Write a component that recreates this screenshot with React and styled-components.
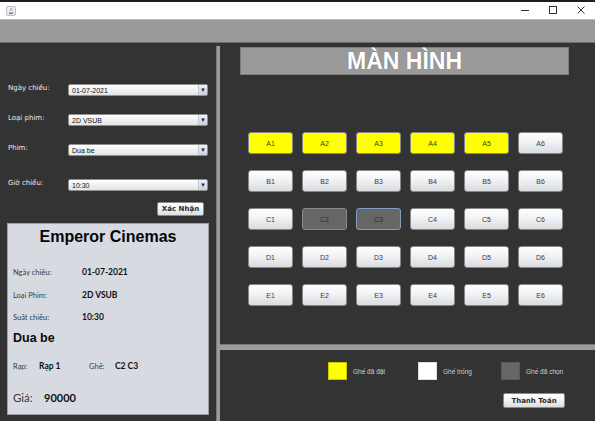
import React from 'react';
import styled, { createGlobalStyle } from 'styled-components';

const Global = createGlobalStyle`
  body {
    margin: 0;
    background: #333333;
    font-family: "Liberation Sans", Arial, sans-serif;
  }
`;

const Frame = styled.div`
  width: 595px;
  height: 421px;
  display: flex;
  flex-direction: column;
  overflow: hidden;
  background: #333333;
`;

const DesktopEdge = styled.div`
  height: 2px;
  background: #1d1d24;
`;

const TitleBar = styled.div`
  height: 17px;
  background: #ffffff;
  border-bottom: 1px solid #b8b8b8;
  display: flex;
  align-items: center;
  padding-left: 6px;
`;

const WindowControls = styled.div`
  margin-left: auto;
  display: flex;
`;

const ControlButton = styled.div`
  width: 28px;
  height: 17px;
  display: flex;
  align-items: center;
  justify-content: center;
`;

const Toolbar = styled.div`
  height: 22px;
  background: #999999;
  border-bottom: 1px solid #6c6c6c;
`;

const Body = styled.div`
  flex: 1;
  display: flex;
  min-height: 0;
`;

const LeftPanel = styled.div`
  width: 216px;
  background: #333333;
  display: flex;
  flex-direction: column;
`;

const VDivider = styled.div`
  width: 4px;
  margin-top: 3px;
  background: #9b9b9b;
  border-left: 1px solid #7a7a7a;
  box-sizing: border-box;
`;

const RightColumn = styled.div`
  flex: 1;
  display: flex;
  flex-direction: column;
`;

const SeatPanel = styled.div`
  flex: 1;
  background: #333333;
  padding: 4px 0 0 20px;
`;

const HDivider = styled.div`
  height: 6px;
  background: #9b9b9b;
  border-top: 1px solid #7a7a7a;
  box-sizing: border-box;
`;

const LegendPanel = styled.div`
  height: 71px;
  background: #333333;
  padding: 12px 30px 0 108px;
  box-sizing: border-box;
`;

/* ---- left form ---- */

const Form = styled.div`
  padding: 41px 8px 0 8px;
`;

const FormRow = styled.div`
  display: flex;
  align-items: center;
  height: 12px;
  margin-top: ${p => p.$top || 0}px;
`;

const FormLabel = styled.span`
  width: 60px;
  margin-top: -5px;
  font-family: "DejaVu Sans", sans-serif;
  font-size: 7px;
  color: #ececec;
`;

const Combo = styled.div`
  width: 140px;
  height: 12px;
  box-sizing: border-box;
  border: 1px solid #8f8f8f;
  border-radius: 2px;
  background: linear-gradient(#ffffff, #f0f1f3 50%, #e2e4e8);
  display: flex;
  align-items: center;
`;

const ComboText = styled.span`
  flex: 1;
  padding-left: 3px;
  font-size: 7px;
  color: #111;
`;

const ComboArrow = styled.span`
  width: 8px;
  height: 10px;
  margin-right: 0;
  border-left: 1px solid #c4cad4;
  background: linear-gradient(#eef1f6, #c9d1de);
  display: flex;
  align-items: center;
  justify-content: center;
  font-size: 6px;
  color: #1c2a48;
`;

const ButtonRow = styled.div`
  display: flex;
  justify-content: flex-end;
  padding-right: 4px;
  margin-top: 11px;
`;

const SwingButton = styled.div`
  width: ${p => p.$w}px;
  height: ${p => p.$h}px;
  box-sizing: border-box;
  border: 1px solid #8a8a8a;
  border-radius: 2px;
  background: linear-gradient(#ffffff, #f3f3f5 50%, #dcdde1);
  display: flex;
  align-items: center;
  justify-content: center;
  font-family: "DejaVu Sans", sans-serif;
  font-size: 7px;
  font-weight: bold;
  color: #2a2a2a;
`;

/* ---- ticket ---- */

const Ticket = styled.div`
  margin: 7px 0 0 7px;
  width: 202px;
  height: 192px;
  box-sizing: border-box;
  background: #d7dae1;
  border: 1px solid #9da0a6;
  padding-left: 5px;
  display: flex;
  flex-direction: column;
  color: #111;
`;

const TicketTitle = styled.div`
  padding-top: 4px;
  line-height: 18px;
  text-align: center;
  font-size: 16px;
  font-weight: bold;
  color: #050505;
  margin-left: -5px;
`;

const TicketRow = styled.div`
  display: flex;
  align-items: center;
  height: ${p => p.$h || 12}px;
  margin-top: ${p => p.$top}px;
`;

const TicketLabel = styled.span`
  width: ${p => p.$w}px;
  font-family: Lato, sans-serif;
  font-size: ${p => p.$size || 7.5}px;
  color: #3a3a3a;
`;

const TicketValue = styled.span`
  width: ${p => (p.$w ? `${p.$w}px` : 'auto')};
  font-family: Lato, sans-serif;
  font-weight: bold;
  font-size: ${p => p.$size || 8.5}px;
  color: #111;
`;

const MovieName = styled.div`
  margin-top: 7px;
  line-height: 16px;
  font-size: 12.5px;
  font-weight: bold;
  color: #0a0a0a;
`;

/* ---- seats ---- */

const Screen = styled.div`
  width: 329px;
  height: 28px;
  box-sizing: border-box;
  background: #9a9a9a;
  border: 1px solid #7c7c7c;
  display: flex;
  align-items: center;
  justify-content: center;
  font-size: 23px;
  font-weight: bold;
  color: #ffffff;
  text-shadow: 0 0 1px rgba(0, 0, 0, 0.25);
`;

const SeatGrid = styled.div`
  margin: 57px 0 0 8px;
  display: grid;
  grid-template-columns: repeat(6, 45px);
  grid-auto-rows: 22px;
  gap: 16px 9px;
`;

const seatBg = {
  booked: '#ffff00',
  picked: '#666666',
  free: 'linear-gradient(#ffffff, #f1f2f4 45%, #dadbe0)',
};

const Seat = styled.div`
  box-sizing: border-box;
  border: 1px solid ${p => (p.$focus ? '#7f9ec4' : p.$state === 'picked' ? '#8a8a8a' : '#888888')};
  border-radius: 3px;
  background: ${p => seatBg[p.$state]};
  display: flex;
  align-items: center;
  justify-content: center;
  font-size: 7px;
  color: ${p => (p.$state === 'picked' ? '#2c2c2c' : '#3a3a3a')};
`;

/* ---- legend ---- */

const Legend = styled.div`
  display: grid;
  grid-template-columns: 90px 83px auto;
  align-items: center;
`;

const LegendItem = styled.div`
  display: flex;
  align-items: center;
`;

const Swatch = styled.div`
  width: 19px;
  height: 18px;
  box-sizing: border-box;
  background: ${p => p.$color};
  border: 1px solid ${p => p.$edge};
`;

const LegendText = styled.span`
  margin-left: 6px;
  font-size: 6.5px;
  color: #d0d0d0;
`;

const PayRow = styled.div`
  display: flex;
  justify-content: flex-end;
  margin-top: 13px;
`;

const rows = ['A', 'B', 'C', 'D', 'E'];

const seatState = id => {
  if (id[0] === 'A' && id !== 'A6') return 'booked';
  if (id === 'C2' || id === 'C3') return 'picked';
  return 'free';
};

const JavaIcon = () => (
  <svg width="10" height="10" viewBox="0 0 10 10">
    <rect x="0.5" y="0.5" width="9" height="9" rx="1.5" fill="#e9ecf2" stroke="#b9c0cc" />
    <path d="M3 6.5h4v1.5H3z" fill="#5a7fb0" />
    <path d="M4.5 2.2c1 .8-.6 1.5.4 2.6M5.6 2.6c.6.6-.4 1 .2 1.8" stroke="#e07b2a" strokeWidth="0.8" fill="none" />
  </svg>
);

const Minimize = () => (
  <svg width="9" height="9" viewBox="0 0 9 9">
    <path d="M0 4.5h8" stroke="#333" strokeWidth="1" />
  </svg>
);

const Maximize = () => (
  <svg width="9" height="9" viewBox="0 0 9 9">
    <rect x="0.5" y="0.5" width="7" height="7" fill="none" stroke="#333" strokeWidth="1" />
  </svg>
);

const Close = () => (
  <svg width="9" height="9" viewBox="0 0 9 9">
    <path d="M0.5 0.5l7 7M7.5 0.5l-7 7" stroke="#333" strokeWidth="1" />
  </svg>
);

const formFields = [
  { label: 'Ngày chiếu:', value: '01-07-2021', top: 0 },
  { label: 'Loại phim:', value: '2D VSUB', top: 18 },
  { label: 'Phim:', value: 'Dua be', top: 18 },
  { label: 'Giờ chiếu:', value: '10:30', top: 23 },
];

export default function App() {
  return (
    <Frame>
      <Global />
      <DesktopEdge />
      <TitleBar>
        <JavaIcon />
        <WindowControls>
          <ControlButton><Minimize /></ControlButton>
          <ControlButton><Maximize /></ControlButton>
          <ControlButton><Close /></ControlButton>
        </WindowControls>
      </TitleBar>
      <Toolbar />
      <Body>
        <LeftPanel>
          <Form>
            {formFields.map(f => (
              <FormRow key={f.label} $top={f.top}>
                <FormLabel>{f.label}</FormLabel>
                <Combo>
                  <ComboText>{f.value}</ComboText>
                  <ComboArrow>▼</ComboArrow>
                </Combo>
              </FormRow>
            ))}
            <ButtonRow>
              <SwingButton $w={47} $h={14}>Xác Nhận</SwingButton>
            </ButtonRow>
          </Form>
          <Ticket>
            <TicketTitle>Emperor Cinemas</TicketTitle>
            <TicketRow $top={20}>
              <TicketLabel $w={69}>Ngày chiếu:</TicketLabel>
              <TicketValue>01-07-2021</TicketValue>
            </TicketRow>
            <TicketRow $top={11}>
              <TicketLabel $w={69}>Loại Phim:</TicketLabel>
              <TicketValue>2D VSUB</TicketValue>
            </TicketRow>
            <TicketRow $top={10}>
              <TicketLabel $w={69}>Suất chiếu:</TicketLabel>
              <TicketValue>10:30</TicketValue>
            </TicketRow>
            <MovieName>Dua be</MovieName>
            <TicketRow $top={14}>
              <TicketLabel $w={26}>Rạp:</TicketLabel>
              <TicketValue $w={50}>Rạp 1</TicketValue>
              <TicketLabel $w={26}>Ghế:</TicketLabel>
              <TicketValue>C2 C3</TicketValue>
            </TicketRow>
            <TicketRow $top={17} $h={16}>
              <TicketLabel $w={31} $size={11.5}>Giá:</TicketLabel>
              <TicketValue $size={11}>90000</TicketValue>
            </TicketRow>
          </Ticket>
        </LeftPanel>
        <VDivider />
        <RightColumn>
          <SeatPanel>
            <Screen>MÀN HÌNH</Screen>
            <SeatGrid>
              {rows.flatMap(r =>
                [1, 2, 3, 4, 5, 6].map(n => {
                  const id = `${r}${n}`;
                  return (
                    <Seat key={id} $state={seatState(id)} $focus={id === 'C3'}>
                      {id}
                    </Seat>
                  );
                })
              )}
            </SeatGrid>
          </SeatPanel>
          <HDivider />
          <LegendPanel>
            <Legend>
              <LegendItem>
                <Swatch $color="#ffff00" $edge="#c8c800" />
                <LegendText>Ghế đã đặt</LegendText>
              </LegendItem>
              <LegendItem>
                <Swatch $color="#ffffff" $edge="#dddddd" />
                <LegendText>Ghế trống</LegendText>
              </LegendItem>
              <LegendItem>
                <Swatch $color="#666666" $edge="#5a5a5a" />
                <LegendText>Ghế đã chọn</LegendText>
              </LegendItem>
            </Legend>
            <PayRow>
              <SwingButton $w={62} $h={15}>Thanh Toán</SwingButton>
            </PayRow>
          </LegendPanel>
        </RightColumn>
      </Body>
    </Frame>
  );
}
